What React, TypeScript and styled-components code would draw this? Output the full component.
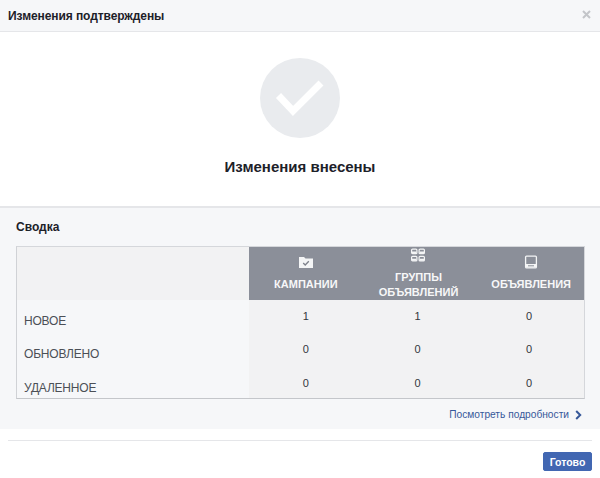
import React from 'react';
import styled, { createGlobalStyle } from 'styled-components';

const GlobalStyle = createGlobalStyle`
  html, body {
    margin: 0;
    padding: 0;
    background: #fff;
    font-family: 'Liberation Sans', Arial, sans-serif;
  }
`;

const Dialog = styled.div`
  width: 600px;
  height: 478px;
  display: flex;
  flex-direction: column;
  overflow: hidden;
  background: #fff;
`;

const Header = styled.div`
  height: 31px;
  display: flex;
  align-items: center;
  justify-content: space-between;
  padding: 0 9px 0 8px;
  background: #f6f7f9;
  border-bottom: 1px solid #e5e6e9;
  color: #1d2129;
  font-size: 12px;
  font-weight: bold;
  letter-spacing: -0.08px;
`;

const Close = styled.svg`
  width: 9px;
  height: 9px;
  margin-bottom: 2px;
`;

const Hero = styled.div`
  height: 174px;
  display: flex;
  flex-direction: column;
  align-items: center;
  padding-top: 26px;
  box-sizing: border-box;
`;

const Badge = styled.div`
  width: 80px;
  height: 80px;
  border-radius: 50%;
  background: #e9ebee;
  display: flex;
  align-items: center;
  justify-content: center;
`;

const HeroTitle = styled.div`
  margin-top: 19px;
  color: #1d2129;
  font-size: 15px;
  font-weight: bold;
  line-height: 20px;
`;

const Summary = styled.div`
  height: 223px;
  box-sizing: border-box;
  padding: 12px 15px 0 16px;
  background: #f6f7f9;
  border-top: 2px solid #e5e6e9;
`;

const SummaryTitle = styled.div`
  color: #1d2129;
  font-size: 12px;
  font-weight: bold;
  line-height: 15px;
  margin-bottom: 11px;
`;

const Table = styled.div`
  display: grid;
  grid-template-columns: 232px repeat(3, 1fr);
  grid-template-rows: 53px 33px 34px 31px;
  border: 1px solid #d5d7db;
  border-bottom-color: #c4c6ca;
  border-left-color: #d0d2d6;
`;

const Corner = styled.div`
  background: #f2f2f3;
`;

const HeadCell = styled.div<{ $lift?: boolean; $nudge: number }>`
  background: #8b8f99;
  color: #f7f7f8;
  font-size: 11px;
  font-weight: bold;
  line-height: 15px;
  text-align: center;
  display: flex;
  flex-direction: column;
  align-items: center;
  padding-top: ${(p) => (p.$lift ? '0' : '7px')};
  padding-left: ${(p) => p.$nudge}px;
  gap: 7px;
  box-sizing: border-box;
`;

const HeadIcon = styled.svg`
  width: 16px;
  height: 16px;
  flex: none;
`;

const RowLabel = styled.div<{ $top: number }>`
  padding: ${(p) => p.$top}px 0 0 7px;
  color: #4b4f56;
  font-size: 12px;
  letter-spacing: -0.2px;
  line-height: 14px;
  overflow: hidden;
`;

const ValueCell = styled.div<{ $top: number }>`
  background: #f2f2f3;
  padding: ${(p) => p.$top}px 0 0 2px;
  color: #33363c;
  font-size: 11px;
  line-height: 13px;
  text-align: center;
`;

const DetailsRow = styled.div`
  display: flex;
  justify-content: flex-end;
  align-items: center;
  gap: 6px;
  padding: 9px 3px 0 0;
  color: #365899;
  font-size: 10.2px;
  line-height: 14px;
`;

const Chevron = styled.svg`
  width: 7px;
  height: 10px;
`;

const Footer = styled.div`
  flex: 1;
  padding: 0 8px;
`;

const Divider = styled.div`
  height: 1px;
  margin-top: 11px;
  background: #e5e6e9;
`;

const FooterActions = styled.div`
  display: flex;
  justify-content: flex-end;
  padding-top: 11px;
`;

const DoneButton = styled.button`
  width: 49px;
  height: 19px;
  padding: 0;
  border: 1px solid #4267b2;
  border-radius: 2px;
  background: #4267b2;
  color: #fff;
  font-family: inherit;
  font-size: 10.5px;
  font-weight: bold;
`;

const columns = ['КАМПАНИИ', 'ГРУППЫ ОБЪЯВЛЕНИЙ', 'ОБЪЯВЛЕНИЯ'];

const rows = [
  { label: 'НОВОЕ', values: [1, 1, 0], labelTop: 14, valueTop: 10 },
  { label: 'ОБНОВЛЕНО', values: [0, 0, 0], labelTop: 14, valueTop: 10 },
  { label: 'УДАЛЕННОЕ', values: [0, 0, 0], labelTop: 14, valueTop: 10 },
];

const CampaignIcon = () => (
  <HeadIcon viewBox="0 0 16 16">
    <path d="M1 3h5l1.5 1.5H15V14H1z" fill="#f4f5f6" />
    <path d="M5.2 9l2 2 3.6-3.8" fill="none" stroke="#7d818b" strokeWidth="1.3" />
  </HeadIcon>
);

const GroupIcon = () => (
  <HeadIcon viewBox="0 0 16 16">
    <g fill="none" stroke="#f4f5f6" strokeWidth="1.2">
      <rect x="1.6" y="2.1" width="5.3" height="4.6" rx="1" />
      <rect x="9.1" y="2.1" width="5.3" height="4.6" rx="1" />
      <rect x="1.6" y="9.3" width="5.3" height="4.6" rx="1" />
      <rect x="9.1" y="9.3" width="5.3" height="4.6" rx="1" />
    </g>
    <path d="M2 4.6h4.5v2H2zM9.5 4.6H14v2H9.5zM2 11.8h4.5v2H2zM9.5 11.8H14v2H9.5z" fill="#f4f5f6" />
  </HeadIcon>
);

const AdIcon = () => (
  <HeadIcon viewBox="0 0 16 16">
    <rect x="2.6" y="2.1" width="10.8" height="11.8" rx="1" fill="none" stroke="#f4f5f6" strokeWidth="1.3" />
    <path d="M3 10h10v3.5H3z" fill="#f4f5f6" />
    <path d="M5 11.8h6" stroke="#8b8f99" strokeWidth="1" />
  </HeadIcon>
);

const icons = [<CampaignIcon key="c" />, <GroupIcon key="g" />, <AdIcon key="a" />];

export default function App() {
  return (
    <Dialog>
      <GlobalStyle />
      <Header>
        Изменения подтверждены
        <Close viewBox="0 0 9 9">
          <path d="M1 1l7 7M8 1L1 8" stroke="#c3c5c9" strokeWidth="2" />
        </Close>
      </Header>
      <Hero>
        <Badge>
          <svg width="50" height="38" viewBox="0 0 50 38">
            <path d="M3.5 16.5L18 32 46 4" fill="none" stroke="#fff" strokeWidth="7" />
          </svg>
        </Badge>
        <HeroTitle>Изменения внесены</HeroTitle>
      </Hero>
      <Summary>
        <SummaryTitle>Сводка</SummaryTitle>
        <Table>
          <Corner />
          {columns.map((name, i) => (
            <HeadCell key={name} $lift={i === 1} $nudge={2 + i * 2}>
              {icons[i]}
              <span>{name}</span>
            </HeadCell>
          ))}
          {rows.map((row) => (
            <React.Fragment key={row.label}>
              <RowLabel $top={row.labelTop}>{row.label}</RowLabel>
              {row.values.map((value, i) => (
                <ValueCell key={i} $top={row.valueTop}>
                  {value}
                </ValueCell>
              ))}
            </React.Fragment>
          ))}
        </Table>
        <DetailsRow>
          Посмотреть подробности
          <Chevron viewBox="0 0 7 10">
            <path d="M1.2 1l4 4-4 4" fill="none" stroke="#365899" strokeWidth="2" />
          </Chevron>
        </DetailsRow>
      </Summary>
      <Footer>
        <Divider />
        <FooterActions>
          <DoneButton>Готово</DoneButton>
        </FooterActions>
      </Footer>
    </Dialog>
  );
}
